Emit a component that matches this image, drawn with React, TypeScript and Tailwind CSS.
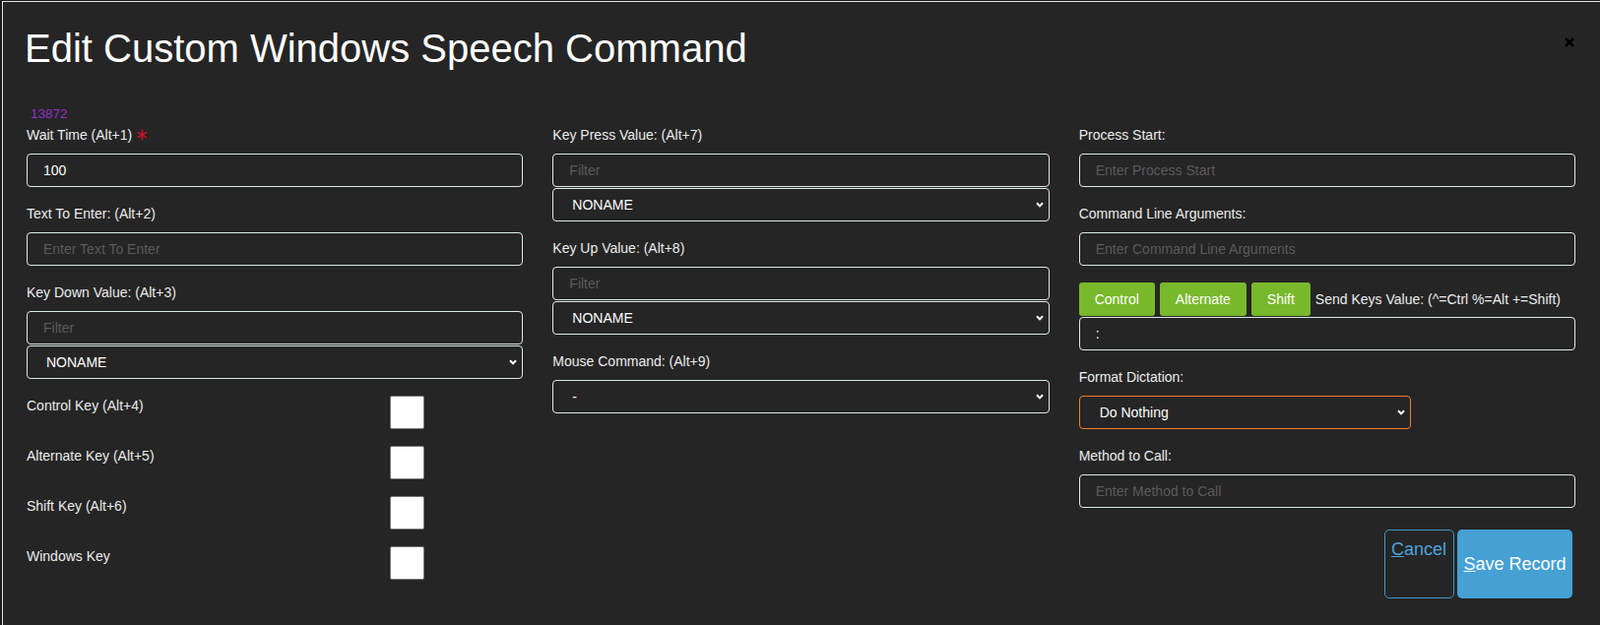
import { useState } from 'react';

const inputCls =
  'block w-full h-[34px] rounded-[4px] border border-[#dcebe8] bg-transparent px-4 text-[14px] text-white outline-none placeholder:text-[#5a5a5a]';

function Label({ children }: { children: React.ReactNode }) {
  return <label className="block text-[14px] leading-4 text-[#ececec] mb-[11px]">{children}</label>;
}

function Chevron() {
  return (
    <svg
      className="pointer-events-none absolute right-[6px] top-1/2 -translate-y-1/2"
      width="8"
      height="6"
      viewBox="0 0 8 6"
      fill="none"
    >
      <path d="M1 1.2 L4 4.4 L7 1.2" stroke="#ffffff" strokeWidth="2" />
    </svg>
  );
}

function Select({ value, options, className = '' }: { value: string; options: string[]; className?: string }) {
  return (
    <div className={`relative ${className}`}>
      <select
        defaultValue={value}
        className="block w-full h-[34px] appearance-none rounded-[4px] border border-[#dcebe8] bg-[#252525] pl-[19px] pr-6 text-[14px] text-white outline-none"
      >
        {options.map((o) => (
          <option key={o}>{o}</option>
        ))}
      </select>
      <Chevron />
    </div>
  );
}

function FilterSelect({ label }: { label: string }) {
  return (
    <div>
      <Label>{label}</Label>
      <input className={inputCls} placeholder="Filter" />
      <Select value="NONAME" options={['NONAME']} className="mt-px" />
    </div>
  );
}

function CheckRow({ label }: { label: string }) {
  const [on, setOn] = useState(false);
  return (
    <div className="flex items-start">
      <span className="w-[369px] pt-[2px] text-[14px] leading-4 text-[#ececec]">{label}</span>
      <input
        type="checkbox"
        checked={on}
        onChange={() => setOn(!on)}
        className="h-[34px] w-[35px] appearance-none rounded-[2px] border border-[#7a7a7a] bg-white"
      />
    </div>
  );
}

function Asterisk() {
  return (
    <svg width="11" height="12" viewBox="0 0 12 12" className="ml-[5px] inline-block">
      <g stroke="#c8102e" strokeWidth="1.8" strokeLinecap="round">
        <line x1="6" y1="0.8" x2="6" y2="11.2" />
        <line x1="1.5" y1="3.4" x2="10.5" y2="8.6" />
        <line x1="1.5" y1="8.6" x2="10.5" y2="3.4" />
      </g>
    </svg>
  );
}

export default function App() {
  return (
    <div className="min-h-screen bg-[#1b1b1b] pt-px pl-[2px] font-['Liberation_Sans',Arial,sans-serif]">
      <div className="min-h-[634px] border-l border-t border-[#e4e4e4] bg-[#252525] pl-6 pr-[25px]">
        {/* Header */}
        <div className="flex items-start justify-between pt-6">
          <h1 className="-ml-[2px] text-[40px] leading-[46px] font-normal text-white">
            Edit Custom Windows Speech Command
          </h1>
          <button className="mt-[12px] mr-[1px]" aria-label="Close">
            <svg width="10" height="10" viewBox="0 0 10 10">
              <path d="M1 1 L9 9 M9 1 L1 9" stroke="#000000" strokeWidth="2.6" />
            </svg>
          </button>
        </div>

        <div className="mt-[36px] pl-[4px] text-[13.5px] leading-4 text-[#9030c8]">13872</div>

        {/* Form */}
        <div className="mt-[5px] grid grid-cols-3 gap-x-[30px] pb-6">
          {/* Column 1 */}
          <div className="flex flex-col">
            <div>
              <label className="mb-[11px] flex items-center text-[14px] leading-4 text-[#ececec]">
                Wait Time (Alt+1)
                <Asterisk />
              </label>
              <input className={inputCls} defaultValue="100" />
            </div>
            <div className="mt-[19px]">
              <Label>Text To Enter: (Alt+2)</Label>
              <input className={inputCls} placeholder="Enter Text To Enter" />
            </div>
            <div className="mt-[19px]">
              <FilterSelect label="Key Down Value: (Alt+3)" />
            </div>
            <div className="mt-[17px] flex flex-col gap-[17px]">
              <CheckRow label="Control Key (Alt+4)" />
              <CheckRow label="Alternate Key (Alt+5)" />
              <CheckRow label="Shift Key (Alt+6)" />
              <CheckRow label="Windows Key" />
            </div>
          </div>

          {/* Column 2 */}
          <div className="flex flex-col">
            <FilterSelect label="Key Press Value: (Alt+7)" />
            <div className="mt-[19px]">
              <FilterSelect label="Key Up Value: (Alt+8)" />
            </div>
            <div className="mt-[19px]">
              <Label>Mouse Command: (Alt+9)</Label>
              <Select value="-" options={['-']} />
            </div>
          </div>

          {/* Column 3 */}
          <div className="flex flex-col">
            <div>
              <Label>Process Start:</Label>
              <input className={inputCls} placeholder="Enter Process Start" />
            </div>
            <div className="mt-[19px]">
              <Label>Command Line Arguments:</Label>
              <input className={inputCls} placeholder="Enter Command Line Arguments" />
            </div>
            <div className="mt-[17px] flex items-center gap-[5px]">
              {['Control', 'Alternate', 'Shift'].map((k) => (
                <button
                  key={k}
                  className="h-[34px] rounded-[3px] bg-[#78b82a] px-4 text-[14px] text-white"
                >
                  {k}
                </button>
              ))}
              <span className="text-[14px] text-[#ececec]">Send Keys Value: (^=Ctrl %=Alt +=Shift)</span>
            </div>
            <input className={`${inputCls} mt-px`} defaultValue=":" />
            <div className="mt-[19px]">
              <Label>Format Dictation:</Label>
              <div className="relative w-[337px]">
                <select
                  defaultValue="Do Nothing"
                  className="block h-[34px] w-full appearance-none rounded-[4px] border border-[#f07f2e] bg-[#252525] pl-[20px] pr-6 text-[14px] text-white outline-none"
                >
                  <option>Do Nothing</option>
                </select>
                <Chevron />
              </div>
            </div>
            <div className="mt-[19px]">
              <Label>Method to Call:</Label>
              <input className={inputCls} placeholder="Enter Method to Call" />
            </div>
            <div className="mt-[22px] mr-[3px] flex justify-end gap-[3px]">
              <button className="flex h-[70px] w-[71px] items-start rounded-[5px] border border-[#3d97cf] pl-[6px] pt-[9px] text-left text-[18px] leading-[21px] text-[#4ea3d8]">
                <span>
                  <span className="underline">C</span>ancel
                </span>
              </button>
              <button className="flex h-[70px] w-[117px] items-center justify-center rounded-[5px] bg-[#45a0d4] text-[18px] text-white">
                <span>
                  <span className="underline">S</span>ave Record
                </span>
              </button>
            </div>
          </div>
        </div>
      </div>
    </div>
  );
}
